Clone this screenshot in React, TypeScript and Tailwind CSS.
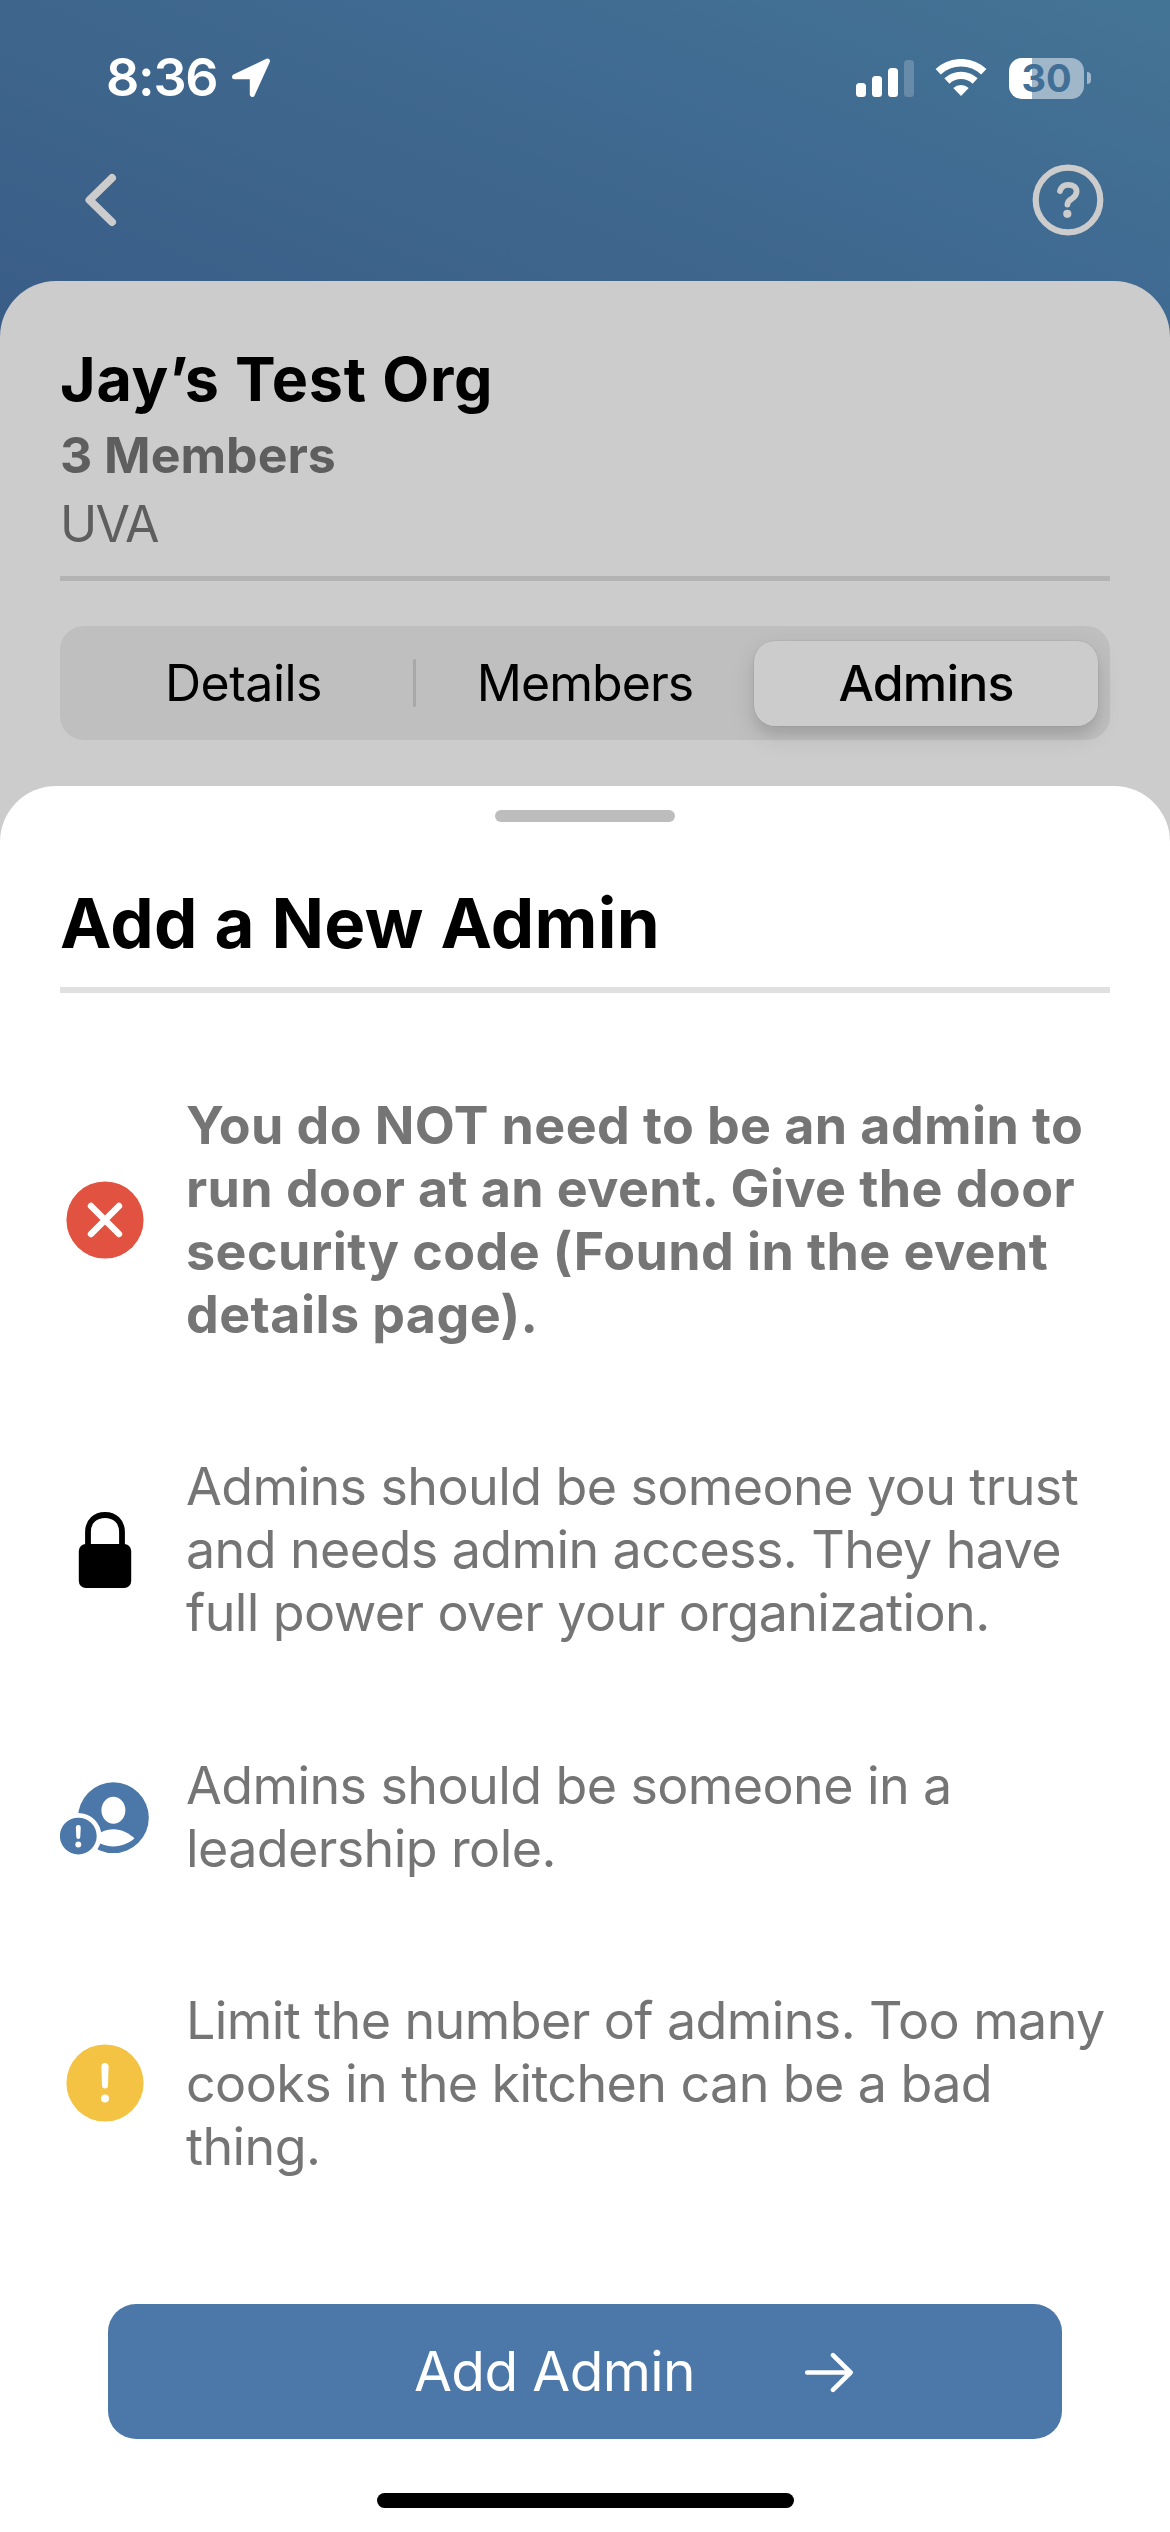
import type { ReactNode } from "react";

function LocationArrow() {
  return (
    <svg width="40" height="40" viewBox="0 0 40 40" fill="#fff" stroke="#fff" strokeWidth="5" strokeLinejoin="round">
      <path d="M3.5 18.8 L36.5 3 L21.3 36.5 V18.8 Z" />
    </svg>
  );
}

function Wifi() {
  return (
    <svg width="52" height="38" viewBox="0 0 52 38" fill="none" stroke="#fff">
      <path d="M3.2 12.8 A33.2 33.2 0 0 1 48.8 12.8" strokeWidth="7.6" />
      <path d="M11.9 22 A20.5 20.5 0 0 1 40.1 22" strokeWidth="7.4" />
      <path d="M26 37 L18.3 29 A11.3 11.3 0 0 1 33.7 29 Z" fill="#fff" stroke="none" />
    </svg>
  );
}

function BackIcon() {
  return (
    <svg width="34" height="54" viewBox="0 0 34 54" fill="none" stroke="#cccccc" strokeWidth="8" strokeLinecap="round" strokeLinejoin="round">
      <path d="M29 5 L6.5 27 L29 49" />
    </svg>
  );
}

function HelpIcon() {
  return (
    <svg width="72" height="72" viewBox="0 0 72 72" fill="none" stroke="#cccccc" strokeLinecap="round">
      <circle cx="36" cy="36" r="32.3" strokeWidth="6.2" />
      <path
        d="M28 27 C29.2 22.6 32 20.8 36.2 20.8 C41.3 20.8 44.6 23.4 44.6 27.6 C44.6 31.2 42.8 32.8 39.8 34.8 C36.6 36.8 35.4 38.2 35.4 40.6"
        strokeWidth="5.8"
      />
      <circle cx="35.3" cy="49.8" r="4.1" fill="#cccccc" stroke="none" />
    </svg>
  );
}

function ErrorIcon() {
  return (
    <svg width="78" height="78" viewBox="0 0 78 78">
      <circle cx="39" cy="39" r="38.6" fill="#e15241" />
      <path d="M25 25 L53 53 M53 25 L25 53" stroke="#fff" strokeWidth="6.4" strokeLinecap="round" />
    </svg>
  );
}

function LockIcon() {
  return (
    <svg width="54" height="76" viewBox="0 0 54 76">
      <path d="M10 36 V20 C10 9 17.5 3 27 3 C36.5 3 44 9 44 20 V36" fill="none" stroke="#000" strokeWidth="5.8" />
      <rect x="0.8" y="32" width="52.4" height="44" rx="7" fill="#000" />
    </svg>
  );
}

function LeaderIcon() {
  return (
    <svg width="90" height="78" viewBox="0 0 90 78">
      <circle cx="54" cy="39.7" r="35.8" fill="#4b77a9" />
      <ellipse cx="54" cy="32.2" rx="12.1" ry="13.6" fill="#fff" />
      <path d="M32.7 60.6 C38 55.5 45.5 51.3 54 51.3 C62.5 51.3 70 55.5 75.3 60.6 C70.5 65.3 62.5 68.8 54 68.8 C45.5 68.8 37.5 65.3 32.7 60.6 Z" fill="#fff" />
      <circle cx="18.5" cy="58.3" r="23.4" fill="#fff" />
      <circle cx="18.5" cy="58.3" r="18.6" fill="#4b77a9" />
      <path d="M16 49.6 A2.5 2.5 0 0 1 21 49.6 L20.5 59.3 A2 2 0 0 1 16.5 59.3 Z" fill="#fff" />
      <circle cx="18.5" cy="66.8" r="3" fill="#fff" />
    </svg>
  );
}

function WarningIcon() {
  return (
    <svg width="78" height="78" viewBox="0 0 78 78">
      <circle cx="39" cy="39" r="38.6" fill="#f4c344" />
      <path d="M35.4 22.6 A3.6 3.6 0 0 1 42.6 22.6 L42 41.5 A3 3 0 0 1 36 41.5 Z" fill="#fff" />
      <circle cx="39" cy="54.4" r="4" fill="#fff" />
    </svg>
  );
}

function ArrowRight() {
  return (
    <svg width="50" height="42" viewBox="0 0 50 42" fill="none" stroke="#fff" strokeWidth="4.6" strokeLinecap="round" strokeLinejoin="round">
      <path d="M3.2 21.5 H46 M29 4.1 L46.6 21.5 L29 38.9" />
    </svg>
  );
}

function StatusBar() {
  return (
    <div className="flex h-[156px] items-center pl-[106px] pr-[79px]">
      <span className="text-[52px] font-semibold leading-[60px] tracking-[-1.2px] text-white">8:36</span>
      <div className="ml-[14px]">
        <LocationArrow />
      </div>
      <div className="ml-auto flex items-center">
        <div className="mr-[21px] flex h-[38px] items-end gap-[6px]">
          <div className="h-[14px] w-[10px] rounded-[3.5px] bg-white" />
          <div className="h-[21px] w-[10px] rounded-[3.5px] bg-white" />
          <div className="h-[29px] w-[10px] rounded-[3.5px] bg-white" />
          <div className="h-[37px] w-[10px] rounded-[3.5px] bg-white/20" />
        </div>
        <Wifi />
        <div className="ml-[22px] flex h-[41px] w-[75px] items-center justify-center rounded-[13px] bg-[linear-gradient(90deg,#ffffff_23px,#a0b7ca_23px)]">
          <span className="text-[38px] font-bold leading-[41px] text-[#426f96]">30</span>
        </div>
        <div className="ml-[3px] h-[12px] w-[4px] rounded-r-full bg-[#a0b7ca]" />
      </div>
    </div>
  );
}

function Tip({ icon, bold, lines }: { icon: ReactNode; bold?: boolean; lines: string[] }) {
  return (
    <li className="flex items-center">
      <div className="mr-[37px] flex w-[89px] shrink-0 justify-center">{icon}</div>
      <p
        className={
          bold
            ? "whitespace-nowrap text-[52px] font-bold leading-[63px] tracking-[0.41px] text-[#757575]"
            : "whitespace-nowrap text-[52px] leading-[63px] tracking-[-0.6px] text-[#757575]"
        }
      >
        {lines.map((line) => (
          <span key={line} className="block">
            {line}
          </span>
        ))}
      </p>
    </li>
  );
}

export default function App() {
  return (
    <div className="flex h-[2532px] w-[1170px] flex-col overflow-hidden bg-[#cccccc] font-[Inter,sans-serif]">
      <div className="bg-[linear-gradient(22deg,#395d87_37%,#3e658c_60%,#406b92_78%,#447495_100%)]">
        <StatusBar />
        <div className="flex h-[87px] items-center justify-between pl-[83px] pr-[66px]">
          <BackIcon />
          <HelpIcon />
        </div>
        <section className="mt-[38px] h-[505px] rounded-t-[56px] bg-[#cccccc] px-[60px] pt-[60px]">
          <h1 className="text-[61px] font-bold leading-[76px] tracking-[0.8px] text-black">Jay’s Test Org</h1>
          <p className="mt-[7px] text-[50px] font-bold leading-[62px] text-[#5e5e5e]">3 Members</p>
          <p className="mt-[7px] text-[50px] leading-[62px] tracking-[-1.6px] text-[#5e5e5e]">UVA</p>
          <div className="mt-[21px] h-[5px] bg-[#b3b3b3]" />
          <div className="mt-[45px] flex h-[114px] items-center rounded-[24px] bg-[#bfbfbf] px-3 text-[50px] leading-[62px] text-black">
            <div className="w-[341px] pl-[2px] text-center tracking-[-0.5px]">Details</div>
            <div className="h-[48px] w-[3px] rounded-full bg-[#a8a8a8]" />
            <div className="w-[338px] text-center tracking-[-0.95px]">Members</div>
            <div className="flex h-[85px] w-[344px] items-center justify-center rounded-[21px] bg-[#cccccc] font-medium tracking-[-0.8px] shadow-[0_9px_24px_rgba(0,0,0,0.13),0_9px_9px_rgba(0,0,0,0.05),0_0_0_1px_rgba(0,0,0,0.04)]">
              Admins
            </div>
          </div>
        </section>
      </div>
      <main className="flex flex-1 flex-col rounded-t-[56px] bg-white px-[60px] pt-[24px]">
        <div className="h-[12px] w-[180px] self-center rounded-full bg-[#bdbdbd]" />
        <h2 className="mt-[59px] text-[69px] font-bold leading-[84px] tracking-[0.3px] text-black">Add a New Admin</h2>
        <div className="mt-[22px] h-[6px] shrink-0 bg-[#e0e0e0]" />
        <ul className="mt-[101px] flex flex-col gap-[109.3px]">
          <Tip
            bold
            icon={<ErrorIcon />}
            lines={[
              "You do NOT need to be an admin to",
              "run door at an event. Give the door",
              "security code (Found in the event",
              "details page).",
            ]}
          />
          <Tip
            icon={<LockIcon />}
            lines={[
              "Admins should be someone you trust",
              "and needs admin access. They have",
              "full power over your organization.",
            ]}
          />
          <Tip icon={<LeaderIcon />} lines={["Admins should be someone in a", "leadership role."]} />
          <Tip
            icon={<WarningIcon />}
            lines={["Limit the number of admins. Too many", "cooks in the kitchen can be a bad", "thing."]}
          />
        </ul>
        <button className="mx-[48px] mt-auto flex h-[135px] shrink-0 items-center rounded-[28px] bg-[#4b77a9] pl-[306px] text-[55px] leading-[68px] tracking-[-0.6px] text-white">
          <span className="pb-[2px]">Add Admin</span>
          <span className="ml-[109px]">
            <ArrowRight />
          </span>
        </button>
        <div className="mb-[24px] mt-[54px] h-[15px] w-[417px] shrink-0 self-center rounded-full bg-black" />
      </main>
    </div>
  );
}
